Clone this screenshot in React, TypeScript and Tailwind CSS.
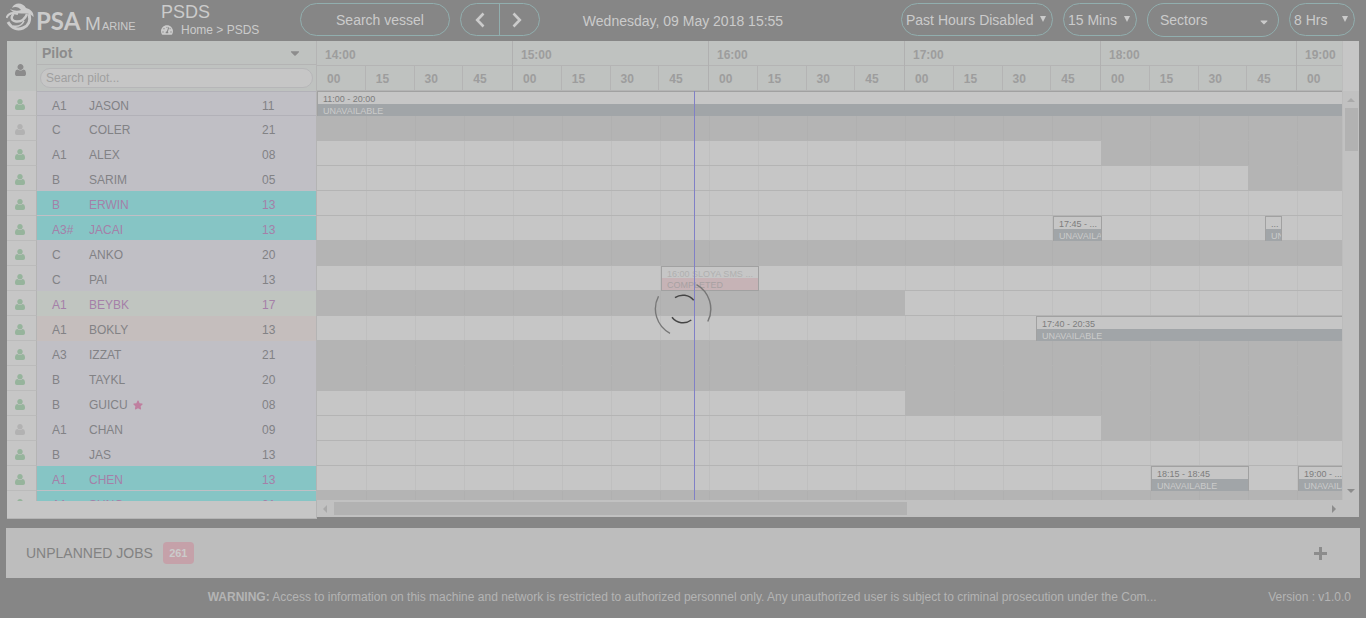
import React from "react";
import { FaCaretDown, FaStar, FaTachometerAlt } from "react-icons/fa";

type Tone = "plain" | "teal" | "green" | "rose";
type Span = { quarters: number; off: boolean };
type Job = { left: string; time: string; label: string; done?: boolean };
type Pilot = {
  grade: string;
  name: string;
  hour: string;
  tone?: Tone;
  away?: boolean;
  star?: boolean;
  spans?: Span[];
  jobs?: Job[];
};

const OFF: Span[] = [{ quarters: 32, off: true }];

const pilots: Pilot[] = [
  { grade: "A1", name: "JASON", hour: "11", jobs: [{ left: "left-0 w-[2352px]", time: "11:00 - 20:00", label: "UNAVAILABLE" }] },
  { grade: "C", name: "COLER", hour: "21", away: true, spans: OFF },
  { grade: "A1", name: "ALEX", hour: "08", spans: [{ quarters: 16, off: false }, { quarters: 16, off: true }] },
  { grade: "B", name: "SARIM", hour: "05", spans: [{ quarters: 19, off: false }, { quarters: 13, off: true }] },
  { grade: "B", name: "ERWIN", hour: "13", tone: "teal" },
  {
    grade: "A3#", name: "JACAI", hour: "13", tone: "teal",
    jobs: [
      { left: "left-[736px] w-[49px]", time: "17:45 - ...", label: "UNAVAILABLE" },
      { left: "left-[948px] w-[17px]", time: "...", label: "UNAVAILABLE" },
    ],
  },
  { grade: "C", name: "ANKO", hour: "20", spans: OFF },
  { grade: "C", name: "PAI", hour: "13", jobs: [{ left: "left-[344px] w-[98px]", time: "16:00 SLOYA SMS ...", label: "COMPLETED", done: true }] },
  { grade: "A1", name: "BEYBK", hour: "17", tone: "green", spans: [{ quarters: 12, off: true }, { quarters: 20, off: false }] },
  { grade: "A1", name: "BOKLY", hour: "13", tone: "rose", jobs: [{ left: "left-[719px] w-[572px]", time: "17:40 - 20:35", label: "UNAVAILABLE" }] },
  { grade: "A3", name: "IZZAT", hour: "21", spans: OFF },
  { grade: "B", name: "TAYKL", hour: "20", spans: OFF },
  { grade: "B", name: "GUICU", hour: "08", star: true, spans: [{ quarters: 12, off: false }, { quarters: 20, off: true }] },
  { grade: "A1", name: "CHAN", hour: "09", away: true, spans: [{ quarters: 16, off: false }, { quarters: 16, off: true }] },
  { grade: "B", name: "JAS", hour: "13" },
  {
    grade: "A1", name: "CHEN", hour: "13", tone: "teal",
    jobs: [
      { left: "left-[834px] w-[98px]", time: "18:15 - 18:45", label: "UNAVAILABLE" },
      { left: "left-[981px] w-[49px]", time: "19:00 - ...", label: "UNAVAILABLE" },
    ],
  },
  { grade: "A1", name: "SUNG", hour: "21", tone: "teal", spans: OFF },
];

const hours = ["14:00", "15:00", "16:00", "17:00", "18:00", "19:00", "20:00", "21:00"];
const quarters = ["00", "15", "30", "45"];

const toneClass: Record<Tone, string> = {
  plain: "bg-[#c0bfc5] border-[#c0bfc5] text-[#828285]",
  teal: "bg-[#86c5c5] border-[#c0bfc5] text-[#a580a8]",
  green: "bg-[#c0c5c0] border-[#c0c5c0] text-[#a580a8]",
  rose: "bg-[#c5bebd] border-[#c5bebd] text-[#828285]",
};

const pill = "rounded-full border border-[#91aeae] text-[#cbcbcb]";

function Logo() {
  return (
    <svg viewBox="0 0 132 30" className="h-[30px] w-[132px]" role="img" aria-label="PSA Marine" fill="#cbcbcb">
      <path d="M6 5C8-1 17-1 20 5C24 6 28 9 27.500 14C25 11 22 10 18 10.500C12 11 7 10 4 6C8 8 12 8 15 7C13 4 9 3 6 5Z" />
      <g fill="none" stroke="#cbcbcb">
        <path d="M0.500 15C2 11 6 9 12 11" strokeWidth="2" />
        <path d="M7.500 11C4 15 6 18 10 18.500C15 19 19 16 21 11" strokeWidth="2.400" />
        <path d="M2 19C6 26 12 27 17 25C22 23 25 18 23 11" strokeWidth="3" />
        <path d="M7 23C12 24 16 22 18 18" strokeWidth="1.600" />
      </g>
      <text x="30" y="27" fontFamily="Lato, sans-serif" fontWeight="700" fontSize="24">PSA</text>
      <text x="79" y="27" fontFamily="'Liberation Sans', sans-serif" fontSize="19">M</text>
      <text x="96" y="27" fontFamily="'Liberation Sans', sans-serif" fontSize="11">ARINE</text>
    </svg>
  );
}

function Person({ className }: { className: string }) {
  return (
    <svg viewBox="0 128 1408 1536" className={className} fill="currentColor" aria-hidden="true">
      <path d="M1408 1405q0 120-73 189.500t-194 69.500h-874q-121 0-194-69.500t-73-189.500q0-53 3.500-103.500t14-109 26.500-108.500 43-97.500 62-81 85.500-53.500 111.500-20q9 0 42 21.500t74.500 48 108 48 133.500 21.500 133.500-21.500 108-48 74.500-48 42-21.500q61 0 111.500 20t85.500 53.500 62 81 43 97.500 26.500 108.500 14 109 3.500 103.500zM1088 512q0 159-112.500 271.500t-271.500 112.500-271.500-112.500-112.500-271.500 112.500-271.500 271.500-112.500 271.500 112.500 112.500 271.500z" />
    </svg>
  );
}

function PillSelect({ label, value, className }: { label: string; value: string; className: string }) {
  return (
    <div className={`relative h-[33px] ${className}`}>
      <select
        aria-label={label}
        className={`h-full w-full appearance-none bg-transparent pl-1 text-sm outline-none ${pill}`}
      >
        <option>{value}</option>
      </select>
      <svg viewBox="0 0 6 6" className="pointer-events-none absolute top-[13px] right-[7px] size-1.5" fill="#cbcbcb" aria-hidden="true">
        <path d="M0 0h6L3 6Z" />
      </svg>
    </div>
  );
}

function Header() {
  return (
    <header className="flex h-[41px] shrink-0 items-start pl-[6px] pr-[11px]">
      <div className="w-[155px] pt-[3px]"><Logo /></div>
      <div className="w-[139px]">
        <h1 className="pt-[2px] text-lg leading-5 text-[#cbcbcb]">PSDS</h1>
        <nav className="flex items-center text-xs leading-4 text-[#cbcbcb]">
          <FaTachometerAlt className="mr-2 size-3" />
          <a href="#home">Home &gt; PSDS</a>
        </nav>
      </div>
      <input
        aria-label="Search vessel"
        placeholder="Search vessel"
        className={`mt-[3px] h-[33px] w-[150px] bg-transparent pl-2.5 text-center text-sm outline-none placeholder:text-[#cbcbcb] ${pill}`}
      />
      <div className={`mt-[3px] ml-2.5 flex h-[33px] w-20 ${pill}`}>
        <button aria-label="Earlier" className="flex w-[39px] shrink-0 items-center justify-center border-r border-[#91aeae]">
          <svg viewBox="0 0 10 16" className="h-4 w-2.5" fill="none" stroke="#cbcbcb" strokeWidth="2.600"><path d="M8.500 1.500 2.200 8l6.300 6.500" /></svg>
        </button>
        <button aria-label="Later" className="flex flex-1 items-center justify-center pr-1.5">
          <svg viewBox="0 0 10 16" className="h-4 w-2.5" fill="none" stroke="#cbcbcb" strokeWidth="2.600"><path d="M1.500 1.500 7.800 8l-6.300 6.500" /></svg>
        </button>
      </div>
      <p className="flex-1 pt-[11px] pr-[75px] text-center text-sm leading-5 text-[#cbcbcb]">Wednesday, 09 May 2018 15:55</p>
      <div className="flex gap-2.5 pt-[3px]">
        <PillSelect label="Past hours" value="Past Hours Disabled" className="w-[152px]" />
        <PillSelect label="Interval" value="15 Mins" className="w-[74px]" />
        <button className={`flex h-[34px] w-[132px] items-center justify-between pr-2 pl-3 text-sm ${pill}`}>
          Sectors
          <FaCaretDown className="mt-1 size-3" />
        </button>
        <PillSelect label="Window" value="8 Hrs" className="w-[66px]" />
      </div>
    </header>
  );
}

function PilotPanel() {
  return (
    <section className="h-[478px] w-[310px] shrink-0 overflow-hidden border-r border-b border-[#b4b4b4] bg-[#c6c6c6]">
      <div className="flex h-[50px] bg-[#bfc2c0]">
        <div className="flex w-[30px] items-center justify-center border-r border-[#b4b4b4] pt-2 pr-0.5">
          <Person className="h-3 w-[11px] text-[#8b8b8b]" />
        </div>
        <div className="flex-1">
          <div className="flex h-6 items-center justify-between border-b border-[#b4b4b4] pr-3.5 pl-[5px]">
            <label htmlFor="pilot" className="text-sm font-bold text-[#8c8c8c]">Pilot</label>
            <FaCaretDown className="size-3.5 text-[#8c8c8c]" />
          </div>
          <input
            id="pilot"
            placeholder="Search pilot..."
            className="mx-[3px] mt-[3px] block h-5 w-[273px] rounded-full border border-[#b6b6b8] bg-[#c6c6c6] px-[5px] text-xs outline-none placeholder:text-[#a0a0a0]"
          />
        </div>
      </div>
      <ul className="h-[410px] overflow-hidden text-xs">
        {pilots.map((p, i) => (
          <li key={p.name} className="flex h-[25px]">
            <span className="flex w-[30px] items-center justify-center border-r border-b border-r-[#b4b4b4] border-b-[#bbbbbb] pt-0.5 pr-[3px]">
              <Person className={`h-[11px] w-2.5 ${p.away ? "text-[#b2b2b2]" : "text-[#96b49c]"}`} />
            </span>
            <div className={`flex flex-1 items-center border-b pt-1 pl-[15px] ${toneClass[p.tone ?? "plain"]} ${i === 0 ? "border-y border-y-[#b2b1b8]" : ""}`}>
              <span className="w-[37px]">{p.grade}</span>
              <span className="flex w-[173px] items-center gap-[5px]">
                {p.name}
                {p.star && <FaStar className="size-2.5 text-[#bf7f9f]" />}
              </span>
              <span>{p.hour}</span>
            </div>
          </li>
        ))}
      </ul>
    </section>
  );
}

function JobBar({ job }: { job: Job }) {
  return (
    <div
      className={`absolute top-0 flex h-[25px] flex-col overflow-hidden border border-[#a1a1a1] bg-[#c6c6c6] text-[9px] ${job.left} ${job.done ? "" : "border-b-0"}`}
    >
      <span className={`shrink-0 overflow-hidden pl-[5px] leading-[14px] whitespace-nowrap ${job.done ? "h-[11px] text-[#b0b0b0]" : "h-3 text-[#7d7d7d]"}`}>{job.time}</span>
      <span className={`h-3 shrink-0 overflow-hidden pl-[5px] leading-[14px] whitespace-nowrap ${job.done ? "bg-[#c6b3b6] text-[#a7a1a2]" : "bg-[#a1a5a8] text-[#cbcbcb]"}`}>{job.label}</span>
    </div>
  );
}

function Timeline() {
  return (
    <section className="flex h-[476px] min-w-0 flex-1 flex-col bg-[#c6c6c6]">
      <div className="flex min-h-0 flex-1">
        <div className="min-w-0 flex-1 overflow-hidden">
          <div className="flex h-[50px] text-xs font-bold text-[#9d9d9d]">
            {hours.map((h) => (
              <div key={h} className="w-[196px] shrink-0 border-r border-[#b0b0b0] bg-[#bfc2c0]">
                <div className="h-[25px] border-b border-[#b4b4b4] pl-2 leading-7">{h}</div>
                <div className="flex h-[25px] border-b border-[#b4b4b4]">
                  {quarters.map((q) => (
                    <div key={q} className="w-[49px] border-r border-[#b4b4b4] pl-2.5 leading-[26px] last:border-r-0">{q}</div>
                  ))}
                </div>
              </div>
            ))}
          </div>
          <div className="relative h-[409px] overflow-hidden">
            {pilots.map((p) => (
              <div key={p.name} className="relative flex h-[25px] border-b border-[#b4b4b4]">
                {(p.spans ?? [{ quarters: 32, off: false }]).map((s, n) => (
                  <div key={n} className={`flex shrink-0 ${s.off ? "bg-[#b4b4b4]" : "bg-[#c6c6c6]"}`}>
                    {Array.from({ length: s.quarters }, (_, q) => (
                      <div key={q} className={`w-[49px] border-l first:border-transparent ${s.off ? "border-[#b0b0b0]" : "border-[#bfbfbf]"}`} />
                    ))}
                  </div>
                ))}
                {p.jobs?.map((j) => <JobBar key={j.left} job={j} />)}
              </div>
            ))}
            <div className="absolute top-0 left-[377px] h-full w-px bg-[#8080c6]" />
          </div>
        </div>
        <div className="flex w-[17px] flex-col border-l border-[#bcbcbc]">
          <div className="h-[50px]" />
          <div className="flex flex-1 flex-col items-center bg-[#c1c1c1] py-[7px]">
            <svg viewBox="0 0 8 4" className="h-1 w-2" fill="#a9a9a9"><path d="M0 4 4 0l4 4Z" /></svg>
            <div className="mt-1.5 h-[43px] w-[13px] bg-[#b2b2b2]" />
            <svg viewBox="0 0 8 4" className="mt-auto h-1 w-2" fill="#8c8c8c"><path d="M0 0h8L4 4Z" /></svg>
          </div>
        </div>
      </div>
      <div className="flex h-[17px] shrink-0 items-center bg-[#c1c1c1] pr-[23px] pl-[6px]">
        <svg viewBox="0 0 4 8" className="h-2 w-1" fill="#a9a9a9"><path d="M4 0v8L0 4Z" /></svg>
        <div className="ml-[7px] h-[13px] w-[573px] bg-[#b2b2b2]" />
        <svg viewBox="0 0 4 8" className="ml-auto h-2 w-1" fill="#8c8c8c"><path d="M0 0l4 4-4 4Z" /></svg>
      </div>
    </section>
  );
}

function Spinner() {
  return (
    <div className="pointer-events-none fixed inset-0 flex items-center justify-center">
      <svg viewBox="-30 -30 60 60" className="size-[60px]" fill="none" role="img" aria-label="Loading">
        <g stroke="#777777" strokeWidth="1.400">
          <path d="M13.500-24.300A27.800 27.800 0 0 1 24.800 12.500" />
          <path d="M-24.500-12.700A27.600 27.600 0 0 0-13 24.300" />
        </g>
        <g stroke="#454545" strokeWidth="1.500">
          <path d="M-8-11.300A13.800 13.800 0 0 1 10.700-8.700" />
          <path d="M-11 8.300A13.800 13.800 0 0 0 8.300 11" />
        </g>
      </svg>
    </div>
  );
}

export default function App() {
  return (
    <div className="flex min-h-screen flex-col bg-[#868686] font-['Liberation_Sans',Arial,sans-serif]">
      <Header />
      <main>
        <div className="flex items-start px-[7px]">
          <PilotPanel />
          <Timeline />
        </div>
        <section className="mx-1.5 mt-[9px] flex h-[50px] items-center bg-[#bdbdbd] pr-[33px] pl-5">
          <h2 className="text-sm text-[#828282]">UNPLANNED JOBS</h2>
          <span className="ml-2.5 w-[31px] rounded-sm bg-[#c5a1a9] text-center text-[11px] leading-[22px] font-bold text-[#cbcbcb]">261</span>
          <button aria-label="Expand unplanned jobs" className="ml-auto text-[#8c8c8c]">
            <svg viewBox="0 0 13 13" className="size-[13px]" fill="currentColor" aria-hidden="true">
              <path d="M5 0h3v5h5v3H8v5H5V8H0V5h5Z" />
            </svg>
          </button>
        </section>
      </main>
      <footer className="flex flex-1 items-start pt-[11px] pr-[15px] text-xs text-[#b4b4b4]">
        <p className="flex-1 pl-[96px] text-center"><b>WARNING:</b> Access to information on this machine and network is restricted to authorized personnel only. Any unauthorized user is subject to criminal prosecution under the Com...</p>
        <span>Version : v1.0.0</span>
      </footer>
      <Spinner />
    </div>
  );
}
